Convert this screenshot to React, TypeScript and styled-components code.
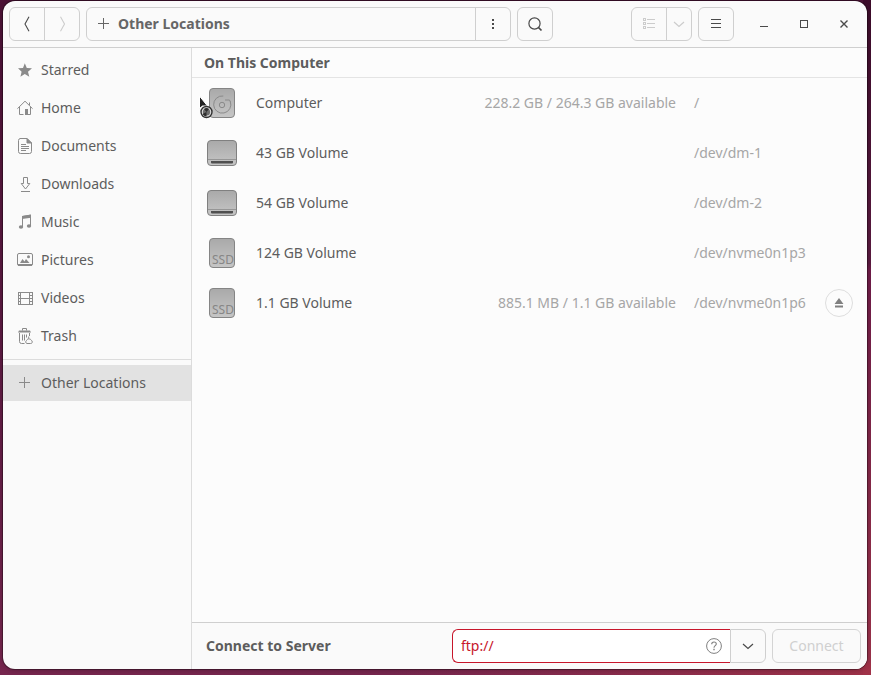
import React from "react";
import styled, { createGlobalStyle, css } from "styled-components";

const GlobalStyle = createGlobalStyle`
  *, *::before, *::after { box-sizing: border-box; }
  html, body { margin: 0; }
  body {
    font-family: "Noto Sans", "Open Sans", sans-serif;
    font-size: 14px;
    line-height: 20px;
    color: #5d5d5d;
  }
  button, input { font: inherit; color: inherit; margin: 0; padding: 0; }
  button { background: none; border: 0; }
  svg { display: block; flex: none; }
`;

const Desktop = styled.div`
  display: flex;
  min-height: 100vh;
  padding: 1px 4px 6px 3px;
  background:
    linear-gradient(to right, rgba(160, 50, 72, 0) 45%, rgba(160, 50, 72, 0.95)) bottom / 100% 12px no-repeat,
    linear-gradient(to bottom, #3c0c2a, #5a1a40 39%, #6e1c48 40%, #842848 70%, #9c324a) right / 8px 100% no-repeat,
    linear-gradient(to bottom, #4c1236, #5c1a42 50%, #76264e);
`;

const AppWindow = styled.div`
  flex: 1;
  min-width: 0;
  display: flex;
  flex-direction: column;
  overflow: hidden;
  border-radius: 12px;
  background: #fafafa;
  box-shadow: 0 0 0 1px rgba(0, 0, 0, 0.3), 0 1px 5px rgba(0, 0, 0, 0.25);
`;

const HeaderBar = styled.header`
  display: flex;
  align-items: center;
  gap: 6px;
  height: 47px;
  padding: 0 6px;
  border-bottom: 1px solid #cfcfcf;
`;

const ButtonGroup = styled.div`
  display: flex;
  height: 34px;
  border: 1px solid #cfcfcf;
  border-radius: 6px;
`;

const PathBar = styled(ButtonGroup)`
  flex: 1;
  min-width: 0;
`;

const ToolButton = styled.button<{ $width?: number; $divided?: boolean }>`
  flex: none;
  display: flex;
  align-items: center;
  justify-content: center;
  width: ${(p) => p.$width ?? 34}px;
  color: #4a4a4a;
  ${(p) => p.$divided && css`border-left: 1px solid #cfcfcf; width: ${(p.$width ?? 34) + 1}px;`}
  &:disabled { color: #cccccc; }
`;

const PathSegment = styled.button`
  flex: 1;
  min-width: 0;
  display: flex;
  align-items: center;
  gap: 6px;
  padding-left: 9px;
  font-weight: 700;
  color: #666666;
`;

const ViewControls = styled.div`
  display: flex;
  gap: 6px;
  margin-left: 72px;
`;

const WindowControls = styled.div`
  display: flex;
  gap: 16px;
  padding: 0 5px 0 12px;
`;

const Body = styled.div`
  flex: 1;
  display: flex;
`;

const Sidebar = styled.nav`
  flex: none;
  width: 189px;
  padding-top: 3px;
  border-right: 1px solid #dcdcdc;
`;

const PlaceList = styled.ul`
  list-style: none;
  margin: 0;
  padding: 0;
  & + & {
    margin-top: 4px;
    padding-top: 5px;
    border-top: 1px solid #dcdcdc;
  }
`;

const PlaceLink = styled.a<{ $selected?: boolean }>`
  display: flex;
  align-items: center;
  gap: 8px;
  height: ${(p) => (p.$selected ? 36 : 38)}px;
  padding-left: 14px;
  color: inherit;
  text-decoration: none;
  background: ${(p) => (p.$selected ? "#e2e2e2" : "transparent")};
  svg { color: #8a8a8a; }
`;

const Content = styled.main`
  flex: 1;
  min-width: 0;
  display: flex;
  flex-direction: column;
  background: #fcfcfc;
`;

const SectionTitle = styled.h2`
  margin: 0;
  height: 30px;
  padding: 5px 12px;
  font-size: 14px;
  line-height: 20px;
  border-bottom: 1px solid #e4e4e4;
`;

const Volumes = styled.table`
  width: 100%;
  table-layout: fixed;
  border-collapse: collapse;
`;

const Col = styled.col<{ $width?: number }>`
  width: ${(p) => (p.$width ? `${p.$width}px` : "auto")};
`;

const Cell = styled.td<{ $dim?: boolean; $end?: boolean }>`
  height: 50px;
  padding: 0 ${(p) => (p.$end ? 18 : 0)}px 0 0;
  vertical-align: middle;
  white-space: nowrap;
  text-align: ${(p) => (p.$end ? "right" : "left")};
  color: ${(p) => (p.$dim ? "#a6a6a6" : "inherit")};
`;

const IconCell = styled(Cell)`
  padding-left: 14px;
`;

const DriveBox = styled.div`
  position: relative;
  width: 32px;
  height: 32px;
`;

const Pointer = styled.svg`
  position: absolute;
  left: -8px;
  top: 9px;
`;

const EjectButton = styled.button`
  display: flex;
  align-items: center;
  justify-content: center;
  width: 28px;
  height: 28px;
  border: 1px solid #dedede;
  border-radius: 50%;
  color: #808080;
`;

const ConnectBar = styled.form`
  display: flex;
  align-items: center;
  gap: 6px;
  height: 47px;
  margin-top: auto;
  padding: 0 6px 0 14px;
  border-top: 1px solid #cfcfcf;
  background: #fafafa;
`;

const ConnectLabel = styled.label`
  flex: 1;
  font-weight: 700;
`;

const AddressBox = styled.div`
  display: flex;
  height: 34px;
`;

const AddressEntry = styled.div`
  display: flex;
  align-items: center;
  width: 278px;
  padding: 0 8px;
  border: 1px solid #c7162b;
  border-right: 0;
  border-radius: 6px 0 0 6px;
  background: #fff;
`;

const AddressInput = styled.input`
  flex: 1;
  min-width: 0;
  border: 0;
  outline: 0;
  background: transparent;
  color: #c7162b;
`;

const HelpButton = styled.button`
  color: #808080;
`;

const RecentButton = styled(ToolButton)`
  width: 36px;
  border: 1px solid #cfcfcf;
  border-radius: 0 6px 6px 0;
`;

const ConnectButton = styled.button`
  min-width: 89px;
  height: 34px;
  padding: 0 16px;
  border: 1px solid #d4d4d4;
  border-radius: 6px;
  &:disabled { color: #d0d0d0; }
`;

function Icon({ children }: { children: React.ReactNode }) {
  return (
    <svg width="16" height="16" viewBox="0 0 16 16" fill="none" stroke="currentColor" aria-hidden="true">
      {children}
    </svg>
  );
}

const icons = {
  back: <Icon><path d="M10 .8 6 8l4 7.200" strokeWidth="1.100" /></Icon>,
  forward: <Icon><path d="M6.500.8 10.500 8l-4 7.200" strokeWidth="1.100" /></Icon>,
  plus: <Icon><path d="M2 7.500h11M7.500 2v11" shapeRendering="crispEdges" /></Icon>,
  dots: <Icon><path d="M7 3h2v2H7zM7 7h2v2H7zM7 11h2v2H7z" fill="currentColor" stroke="none" /></Icon>,
  search: <Icon><circle cx="7.500" cy="7.500" r="5.600" strokeWidth="1.200" /><path d="m11.500 11.500 3 3" strokeWidth="1.700" /></Icon>,
  list: (
    <Icon>
      <path d="M2.500 2.500h2v2h-2zM2.500 6.500h2v2h-2zM2.500 10.500h2v2h-2zM6 3.500h8M6 7.500h8M6 11.500h8" shapeRendering="crispEdges" />
    </Icon>
  ),
  chevron: <Icon><path d="m3 6 5 4.500L13 6" strokeWidth="1.200" /></Icon>,
  menu: <Icon><path d="M3 3.500h10M3 7.500h10M3 11.500h10" shapeRendering="crispEdges" /></Icon>,
  minimize: <Icon><path d="M4 10.500h8" shapeRendering="crispEdges" /></Icon>,
  maximize: <Icon><path d="M4.500 4.500h7v7h-7z" shapeRendering="crispEdges" /></Icon>,
  close: <Icon><path d="m4.500 4.500 7 7m0-7-7 7" strokeWidth="1.400" /></Icon>,
  star: (
    <Icon>
      <path d="m7.800 1.200 2 4.700 5.200.4-4 3.400 1.300 5-4.500-2.800-4.400 2.800 1.200-5L1 6.300l5-.4z" fill="currentColor" stroke="none" />
    </Icon>
  ),
  home: (
    <Icon>
      <path d="M.4 8.700 8 1.200l7.600 7.500M2.500 7v7.500h4M13.500 7v7.500h-5M12.500 5V2.500" />
      <path d="M8 9h3v6H8z" fill="currentColor" stroke="none" />
    </Icon>
  ),
  document: (
    <Icon>
      <path d="M3 .5h7L14.500 5v8.500a2 2 0 0 1-2 2H3.500a2 2 0 0 1-2-2v-11a2 2 0 0 1 2-2z" />
      <path d="M10 .5V5h4.500z" fill="currentColor" />
      <path d="M4 6.500h5M4 8.500h8M4 10.500h8M4 12.500h5" />
    </Icon>
  ),
  download: <Icon><path d="M6.500 1.500h4v6h2.300L8.500 13 4.200 7.500h2.300zM4 15.500h9" /></Icon>,
  music: (
    <Icon>
      <path d="M5.500 13V2.500l8-1.300V12" />
      <path d="M5 2 14 .6v3.200L5 5z" fill="currentColor" stroke="none" />
      <ellipse cx="4" cy="13" rx="2.200" ry="1.800" fill="currentColor" stroke="none" />
      <ellipse cx="12" cy="12" rx="2.200" ry="1.800" fill="currentColor" stroke="none" />
    </Icon>
  ),
  picture: (
    <Icon>
      <rect x=".5" y="1.500" width="15" height="12" rx="1.500" />
      <path d="M1 12h14v2H1zM3 11l2.500-4 2 2.500L9 7l3.500 4z" fill="currentColor" stroke="none" />
      <circle cx="11.500" cy="4.800" r="1.500" fill="currentColor" stroke="none" />
    </Icon>
  ),
  video: (
    <Icon>
      <path d="M3.500 2.500h9v12h-9zM4 8.500h9" shapeRendering="crispEdges" />
      <path d="M1.500 2v13M15.500 2v13" shapeRendering="crispEdges" />
      <path d="M2.500 2v13M14 2v13" strokeDasharray="1 2" strokeWidth="2" />
    </Icon>
  ),
  trash: (
    <Icon>
      <path d="M5.500 2.500v-2h4v2M2.500 5v8.500a2 2 0 0 0 2 2h3M12.500 5v3" />
      <path d="M2 2.500h11l1 2H1z" fill="currentColor" stroke="none" />
      <path d="M5.500 6.500v6M7.500 6.500v6M9.500 6.500v3" />
      <path d="M11.700 8.500v2.200M9.800 15.500a1.700 1.700 0 0 1-.3-3c.5-1 1.700-2 3-1.500 1.500.3 1.800 1.300 2.500 2 .7 1.400 0 2.500-1.400 2.500z" />
    </Icon>
  ),
  eject: <Icon><path d="M8 3 12.500 9h-9zM4 10.500h8v2H4z" fill="currentColor" stroke="none" /></Icon>,
  help: (
    <Icon>
      <circle cx="8" cy="8" r="7.400" />
      <path d="M5.700 6.300C5.700 4.900 6.600 4 8 4s2.300.8 2.300 2c0 1.600-2.300 1.800-2.300 3.700" strokeWidth="1.100" />
      <path d="M7.300 10.800h1.400v1.400H7.300z" fill="currentColor" stroke="none" />
    </Icon>
  ),
};

type DriveKind = "disk" | "removable" | "ssd";

function DriveIcon({ kind }: { kind: DriveKind }) {
  const fill = `url(#metal-${kind})`;
  return (
    <svg width="32" height="32" viewBox="0 0 32 32" aria-hidden="true">
      <defs>
        <linearGradient id={`metal-${kind}`} x1="0" y1="0" x2="0" y2="1">
          <stop offset="0" stopColor="#a9a9a9" />
          <stop offset="1" stopColor="#c6c6c6" />
        </linearGradient>
      </defs>
      {kind === "removable" ? (
        <>
          <rect x="1.500" y="3.500" width="29" height="25" rx="3.500" fill={fill} stroke="#808080" />
          <path d="M2 22.500h28" stroke="#969696" />
          <path d="M5 24h22v1.500a1 1 0 0 1-1 1H6a1 1 0 0 1-1-1z" fill="#505050" />
        </>
      ) : (
        <rect x="3.500" y="1.500" width="25" height="29" rx="3.500" fill={fill} stroke="#858585" />
      )}
      {kind === "disk" && (
        <g fill="none" stroke="#8a8a8a">
          <path d="M24.300 14.500a8.600 8.600 0 1 1-7-5.500" />
          <path d="M19 13h4.500l1 2" />
          <circle cx="16" cy="18" r="2.700" />
        </g>
      )}
      {kind === "ssd" && (
        <text x="6" y="27" fontFamily="Noto Sans, sans-serif" fontSize="12" fill="#868686">SSD</text>
      )}
    </svg>
  );
}

function BusyPointer() {
  return (
    <Pointer width="18" height="24" viewBox="0 0 18 24" aria-hidden="true">
      <path d="M1.500 0v12.500l3-2.500h5z" fill="#222" stroke="#fff" />
      <circle cx="8.500" cy="16" r="5.500" fill="#d8d8d8" stroke="#333" strokeWidth="1.400" />
      <circle cx="8.500" cy="16" r="3.600" fill="#6d6d6d" />
      <path d="M8.500 16 6 13a3.800 3.800 0 0 1 5 0zM8.500 16l-4 2a4.500 4.500 0 0 0 4 2.500z" fill="#2e2e2e" />
    </Pointer>
  );
}

const places = [
  { name: "Starred", icon: icons.star },
  { name: "Home", icon: icons.home },
  { name: "Documents", icon: icons.document },
  { name: "Downloads", icon: icons.download },
  { name: "Music", icon: icons.music },
  { name: "Pictures", icon: icons.picture },
  { name: "Videos", icon: icons.video },
  { name: "Trash", icon: icons.trash },
];

const volumes: { name: string; kind: DriveKind; space?: string; path: string; busy?: boolean; ejectable?: boolean }[] = [
  { name: "Computer", kind: "disk", space: "228.2 GB / 264.3 GB available", path: "/", busy: true },
  { name: "43 GB Volume", kind: "removable", path: "/dev/dm-1" },
  { name: "54 GB Volume", kind: "removable", path: "/dev/dm-2" },
  { name: "124 GB Volume", kind: "ssd", path: "/dev/nvme0n1p3" },
  { name: "1.1 GB Volume", kind: "ssd", space: "885.1 MB / 1.1 GB available", path: "/dev/nvme0n1p6", ejectable: true },
];

export default function App() {
  const [address, setAddress] = React.useState("ftp://");
  return (
    <>
      <GlobalStyle />
      <Desktop>
        <AppWindow>
          <HeaderBar>
            <ButtonGroup>
              <ToolButton aria-label="Back">{icons.back}</ToolButton>
              <ToolButton aria-label="Forward" $divided disabled>{icons.forward}</ToolButton>
            </ButtonGroup>
            <PathBar>
              <PathSegment>{icons.plus}Other Locations</PathSegment>
              <ToolButton aria-label="Folder menu" $divided>{icons.dots}</ToolButton>
            </PathBar>
            <ButtonGroup>
              <ToolButton aria-label="Search">{icons.search}</ToolButton>
            </ButtonGroup>
            <ViewControls>
              <ButtonGroup>
                <ToolButton aria-label="List view" disabled>{icons.list}</ToolButton>
                <ToolButton aria-label="View options" $divided $width={24} disabled>{icons.chevron}</ToolButton>
              </ButtonGroup>
              <ButtonGroup>
                <ToolButton aria-label="Main menu">{icons.menu}</ToolButton>
              </ButtonGroup>
            </ViewControls>
            <WindowControls>
              <ToolButton aria-label="Minimize" $width={24}>{icons.minimize}</ToolButton>
              <ToolButton aria-label="Maximize" $width={24}>{icons.maximize}</ToolButton>
              <ToolButton aria-label="Close" $width={24}>{icons.close}</ToolButton>
            </WindowControls>
          </HeaderBar>
          <Body>
            <Sidebar aria-label="Places">
              <PlaceList>
                {places.map((place) => (
                  <li key={place.name}>
                    <PlaceLink href="#">{place.icon}{place.name}</PlaceLink>
                  </li>
                ))}
              </PlaceList>
              <PlaceList>
                <li>
                  <PlaceLink href="#" $selected aria-current="page">{icons.plus}Other Locations</PlaceLink>
                </li>
              </PlaceList>
            </Sidebar>
            <Content>
              <SectionTitle>On This Computer</SectionTitle>
              <Volumes aria-label="On This Computer">
                <colgroup>
                  <Col $width={64} />
                  <Col />
                  <Col $width={220} />
                  <Col $width={131} />
                  <Col $width={42} />
                </colgroup>
                <tbody>
                  {volumes.map((volume) => (
                    <tr key={volume.name}>
                      <IconCell>
                        <DriveBox>
                          <DriveIcon kind={volume.kind} />
                          {volume.busy && <BusyPointer />}
                        </DriveBox>
                      </IconCell>
                      <Cell>{volume.name}</Cell>
                      <Cell $dim $end>{volume.space}</Cell>
                      <Cell $dim>{volume.path}</Cell>
                      <Cell>
                        {volume.ejectable && <EjectButton aria-label="Unmount">{icons.eject}</EjectButton>}
                      </Cell>
                    </tr>
                  ))}
                </tbody>
              </Volumes>
              <ConnectBar onSubmit={(event) => event.preventDefault()}>
                <ConnectLabel htmlFor="server-address">Connect to Server</ConnectLabel>
                <AddressBox>
                  <AddressEntry>
                    <AddressInput id="server-address" value={address} onChange={(event) => setAddress(event.target.value)} />
                    <HelpButton type="button" aria-label="Help">{icons.help}</HelpButton>
                  </AddressEntry>
                  <RecentButton type="button" aria-label="Recent servers">{icons.chevron}</RecentButton>
                </AddressBox>
                <ConnectButton disabled>Connect</ConnectButton>
              </ConnectBar>
            </Content>
          </Body>
        </AppWindow>
      </Desktop>
    </>
  );
}
